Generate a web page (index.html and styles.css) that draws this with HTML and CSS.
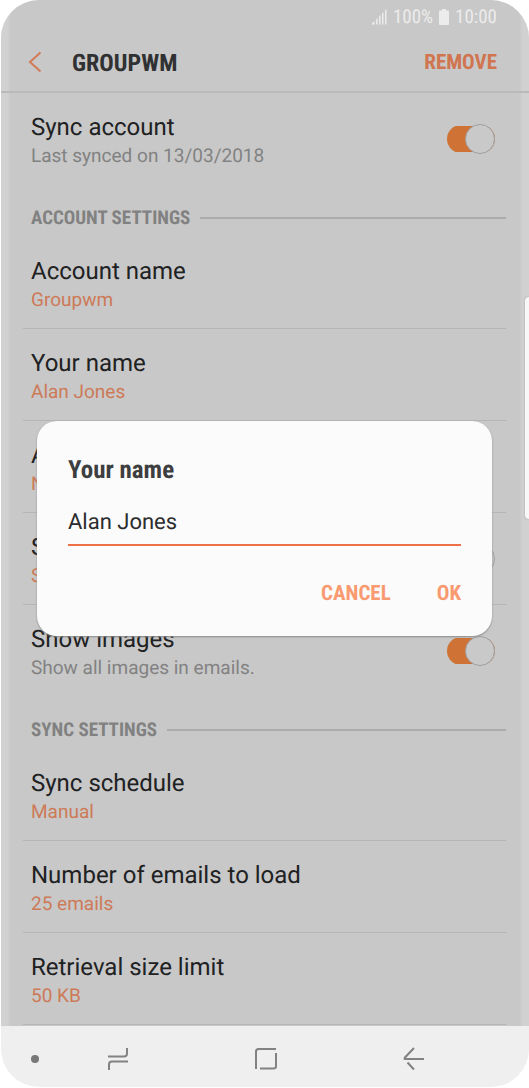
FILE: index.html
```html
<!DOCTYPE html>
<html lang="en">
<head>
<meta charset="utf-8">
<meta name="viewport" content="width=device-width, initial-scale=1">
<title>Groupwm</title>
<link rel="stylesheet" href="styles.css">
</head>
<body>
<div class="phone">
  <div class="app">
    <div class="status">
      <svg class="signal" width="16" height="16" viewBox="0 0 16 16" aria-hidden="true"><path d="M0 15.500L3.500 12V15.500ZM5 10.500l1.500-1.500V15.500H5ZM8 7.500l1.500-1.500V15.500H8ZM11 4.500l1.500-1.500V15.500H11ZM14 1.500l1.500-1.500V15.500H14Z"/></svg>
      <span>100%</span>
      <svg class="battery" width="10" height="16" viewBox="0 0 10 16" aria-hidden="true"><path d="M3 0h4v1.500h2q1 0 1 1V15q0 1-1 1H1q-1 0-1-1V2.500q0-1 1-1h2z"/></svg>
      <span>10:00</span>
    </div>
    <header class="bar">
      <button class="back" aria-label="Back"><svg width="14" height="22" viewBox="0 0 14 22"><path d="M12.500 1.500L2 11l10.500 9.500"/></svg></button>
      <h1 class="title">GROUPWM</h1>
      <button class="remove">REMOVE</button>
    </header>
    <main class="settings">
      <label class="row last">
        <span class="text"><span class="name">Sync account</span><span class="note">Last synced on 13/03/2018</span></span>
        <input class="toggle" type="checkbox" checked>
      </label>
      <h2 class="section">ACCOUNT SETTINGS</h2>
      <div class="row"><span class="text"><span class="name">Account name</span><span class="value">Groupwm</span></span></div>
      <div class="row"><span class="text"><span class="name">Your name</span><span class="value">Alan Jones</span></span></div>
      <div class="row"><span class="text"><span class="name">A</span><span class="value">N</span></span></div>
      <label class="row">
        <span class="text"><span class="name">S</span><span class="value">S</span></span>
        <input class="toggle" type="checkbox">
      </label>
      <label class="row last">
        <span class="text"><span class="name">Show images</span><span class="note">Show all images in emails.</span></span>
        <input class="toggle" type="checkbox" checked>
      </label>
      <h2 class="section">SYNC SETTINGS</h2>
      <div class="row"><span class="text"><span class="name">Sync schedule</span><span class="value">Manual</span></span></div>
      <div class="row"><span class="text"><span class="name">Number of emails to load</span><span class="value">25 emails</span></span></div>
      <div class="row"><span class="text"><span class="name">Retrieval size limit</span><span class="value">50 KB</span></span></div>
    </main>
    <div class="overlay">
      <form class="dialog" role="dialog" aria-labelledby="dialog-title">
        <label class="dialog-title" id="dialog-title" for="your-name">Your name</label>
        <input class="field" id="your-name" type="text" value="Alan Jones">
        <div class="actions">
          <button class="action" type="button">CANCEL</button>
          <button class="action" type="button">OK</button>
        </div>
      </form>
    </div>
    <div class="handle"></div>
  </div>
  <nav class="nav">
    <button class="key" aria-label="Hide bar"><svg width="10" height="10" viewBox="0 0 10 10"><circle cx="5" cy="5" r="4" class="dot"/></svg></button>
    <div class="keys">
      <button class="key" aria-label="Recent apps"><svg width="22" height="24" viewBox="0 0 22 24"><path d="M1 9.500H17Q20 9.500 20 6.500V1M21 14.500H5Q2 14.500 2 17.500V23"/></svg></button>
      <button class="key" aria-label="Home"><svg width="24" height="24" viewBox="0 0 24 24"><path d="M2 22V4.500Q2 2 4.500 2H22M22 6V19.500Q22 21.500 19.500 21.500H6"/></svg></button>
      <button class="key" aria-label="Back"><svg width="22" height="24" viewBox="0 0 22 24"><path d="M11 1L2 10.500Q1 12 2 12H21M4.500 15.500L11 22.500"/></svg></button>
    </div>
  </nav>
</div>
</body>
</html>
```
FILE: styles.css
```css
* { box-sizing: border-box; }

body {
  margin: 0;
  background: #fff;
  color: #202122;
  font-family: Roboto, sans-serif;
  text-rendering: geometricPrecision;
}

button {
  padding: 0;
  border: 0;
  background: none;
  font-family: "Roboto Condensed", Roboto, sans-serif;
  font-weight: 700;
  text-rendering: inherit;
}

svg { display: block; fill: none; }

.phone {
  margin-left: 1px;
  border-radius: 38px;
  overflow: hidden;
  background: #efefef;
}

.app {
  position: relative;
  background: linear-gradient(90deg, #d1d1d1 0 6px, #c8c8c8 10px calc(100% - 10px), #d1d1d1 calc(100% - 6px));
}

.status {
  display: flex;
  align-items: center;
  justify-content: flex-end;
  gap: 6px;
  height: 33px;
  padding-right: 32px;
  color: #ececec;
  font: 400 19px/33px "Roboto Condensed", Roboto, sans-serif;
}

.signal, .battery { fill: #ececec; }

.bar {
  display: flex;
  align-items: center;
  height: 60px;
  padding: 0 32px 0 27px;
  border-bottom: 2px solid #bababa;
}

.back svg { stroke: #d27a55; stroke-width: 2; }

.title {
  flex: 1;
  margin: 2px 0 0 30px;
  color: #303132;
  font: 700 24px/32px "Roboto Condensed", Roboto, sans-serif;
}

.remove { margin-top: 2px; color: #d07550; font-size: 21px; line-height: 32px; }

.settings { padding: 0 23px 1px 22px; }

.row {
  display: flex;
  align-items: center;
  height: 92px;
  padding: 0 11px 0 8px;
  border-bottom: 1px solid #b5b5b5;
}

.row.last { border-color: transparent; }

.text { display: flex; flex: 1; flex-direction: column; padding-top: 3px; }

.name { font-size: 24px; line-height: 32px; }

.note, .value { font-size: 19px; line-height: 26px; }

.note { color: #828282; }

.value { color: #cd7a57; }

.toggle {
  display: flex;
  align-items: center;
  justify-content: flex-end;
  width: 48px;
  height: 28px;
  margin: 0;
  appearance: none;
  background: linear-gradient(#b2b2b2 0 0) center / 46px 26px no-repeat;
  border-radius: 14px;
}

.toggle::before {
  content: "";
  width: 28px;
  height: 28px;
  border: 1px solid #a0a0a0;
  border-radius: 50%;
  background: #c9c9c9;
}

.toggle:checked {
  background: linear-gradient(#ce7236 0 0) center / 100% 26px no-repeat;
}

.section {
  display: flex;
  align-items: center;
  gap: 10px;
  height: 52px;
  margin: 0;
  padding: 13px 0 0 8px;
  color: #818181;
  font: 700 19px/28px "Roboto Condensed", Roboto, sans-serif;
}

.section::after {
  content: "";
  flex: 1;
  height: 2px;
  background: #ababab;
}

.overlay {
  position: absolute;
  inset: 0;
  display: flex;
  align-items: center;
  padding: 30px 37px 0 36px;
}

.dialog {
  display: flex;
  flex: 1;
  flex-direction: column;
  padding: 33px 31px 26px;
  border-radius: 20px;
  background: #fbfbfb;
  box-shadow: 0 1px 2px #8a8a8a;
}

.dialog-title {
  color: #3d3e3f;
  font: 700 25px/34px "Roboto Condensed", Roboto, sans-serif;
}

.field {
  width: 100%;
  height: 42px;
  margin-top: 16px;
  padding: 0 0 2px;
  border: 0;
  border-bottom: 2px solid #ed7048;
  background: none;
  color: #2b2c2d;
  font: 400 22px/32px Roboto, sans-serif;
  text-rendering: inherit;
  outline: 0;
}

.actions {
  display: flex;
  justify-content: flex-end;
  gap: 46px;
  margin-top: 32px;
}

.action { color: #fa9a70; font-size: 21px; line-height: 32px; }

.handle {
  position: absolute;
  top: 297px;
  right: 0;
  width: 4px;
  height: 222px;
  border-radius: 6px 0 0 6px;
  background: #f8f8f8;
  box-shadow: 0 0 2px #999;
}

.nav {
  display: flex;
  align-items: center;
  height: 61px;
  padding: 4px 104px 0 29px;
}

.keys {
  display: flex;
  flex: 1;
  justify-content: space-between;
  margin-left: 67px;
}

.key svg { stroke: #828282; stroke-width: 2; }

.key .dot { fill: #787878; stroke: none; }
```
